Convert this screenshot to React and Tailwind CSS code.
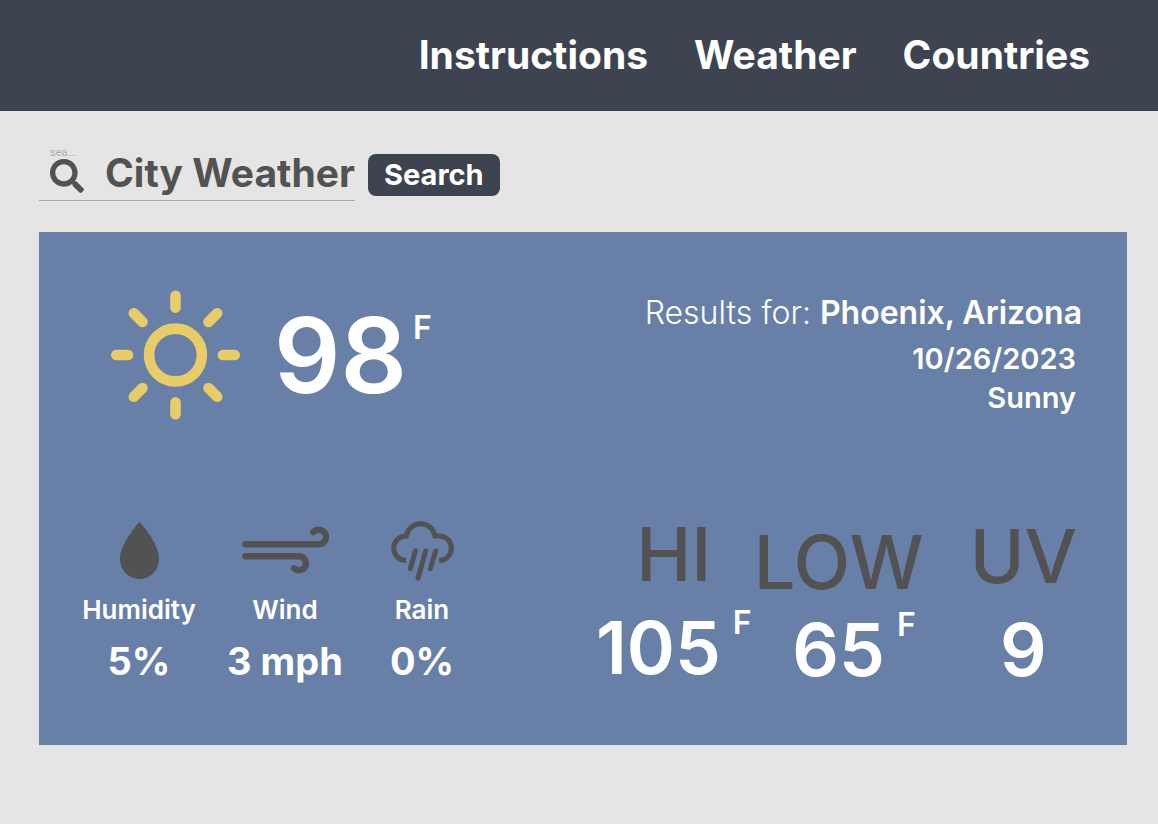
import { FaSearch } from "react-icons/fa";

const navItems = ["Instructions", "Weather", "Countries"];

function SunIcon() {
  return (
    <svg className="h-[130px] w-[130px] shrink-0" viewBox="0 0 130 130" fill="none" stroke="#e8cc68" strokeWidth="10.6" strokeLinecap="round" aria-hidden="true">
      <circle cx="65.5" cy="65" r="26.4" />
      <path d="M65.5 5.8V17.6M65.5 112.4V124.2M6.3 65H18.1M112.9 65H124.700" />
      <path d="M23.8 23.3L32.5 32M98.5 98L107.2 106.7M23.8 106.7L32.5 98M98.5 32L107.2 23.3" />
    </svg>
  );
}

function DropIcon() {
  return (
    <svg className="h-[57px] w-[39px]" viewBox="0 0 39 57" fill="#525252" aria-hidden="true">
      <path d="M19.5 0C12 8 0 24.5 0 36.5C0 48.2 8.7 57 19.5 57S39 48.2 39 36.5C39 24.5 27 8 19.5 0Z" />
    </svg>
  );
}

function WindIcon() {
  return (
    <svg className="h-12 w-[88px]" viewBox="0 0 88 48" fill="none" stroke="#525252" strokeWidth="6.4" strokeLinecap="round" aria-hidden="true">
      <path d="M4.5 18.3H77.5A7.3 7.3 0 1 0 72.3 6.1" />
      <path d="M4.5 30.3H58A7 7 0 1 1 53 42.3" />
    </svg>
  );
}

function RainIcon() {
  return (
    <svg className="h-[62px] w-[63px]" viewBox="0 0 189 186" fill="none" stroke="#525252" strokeWidth="15" aria-hidden="true">
      <path d="M45 124.5A36.75 36.75 0 0 1 45 51H46A43.5 43.5 0 0 1 132 51H144.5A36.75 36.75 0 0 1 144.5 124.5" />
      <path strokeLinecap="round" d="M73 96L58 149M104 96L81 177M134 96L118 149" />
    </svg>
  );
}

const conditions = [
  { label: "Humidity", value: "5%", Icon: DropIcon },
  { label: "Wind", value: "3 mph", Icon: WindIcon },
  { label: "Rain", value: "0%", Icon: RainIcon },
];

const extremes = [
  { label: "HI", value: "105", unit: "F", column: "mr-0.5 items-center", gap: "mt-5" },
  { label: "LOW", value: "65", unit: "F", column: "items-end pt-2", gap: "mt-3.5 pr-2" },
  { label: "UV", value: "9", column: "ml-[46px] items-center pt-0.5", gap: "mt-5" },
];

export default function App() {
  return (
    <div className="min-h-screen bg-[#e5e5e5] font-['Inter',sans-serif] text-white">
      <header className="bg-[#3d434f] pt-[31px] pr-[68px] pb-8 pl-10">
        <nav className="flex flex-wrap justify-end gap-[46px] text-[39px] leading-[48px] font-bold">
          {navItems.map((item) => (
            <a key={item} href={`#${item.toLowerCase()}`}>{item}</a>
          ))}
        </nav>
      </header>

      <main className="pr-[31px] pl-[39px]">
        <form className="flex items-end pt-[35px]" onSubmit={(e) => e.preventDefault()}>
          <div className="flex w-[316px] items-end border-b border-[#a9a9a9] pl-[11px] text-[#525252]">
            <label htmlFor="city" className="flex w-[55px] shrink-0 flex-col pb-[7px]">
              <span className="font-[Roboto,sans-serif] text-[11px] leading-3 text-[#ababab]">sea...</span>
              <FaSearch className="h-[34px] w-[34px]" aria-hidden="true" />
            </label>
            <input
              id="city"
              type="text"
              defaultValue="City Weather"
              aria-label="City"
              className="h-[54px] w-full min-w-0 bg-transparent text-[39px] font-bold outline-none"
            />
          </div>
          <button type="submit" className="mb-[5px] ml-[13px] h-[42px] rounded-lg bg-[#3d434f] px-4 text-[29px] leading-[42px] font-bold">
            Search
          </button>
        </form>

        <section className="mt-[31px] bg-[#687fa8] pb-[58px]">
          <div className="flex items-start justify-between pt-[58px] pr-[45px] pl-[71px]">
            <div className="flex">
              <SunIcon />
              <div className="ml-[34px] flex items-start">
                <span className="text-[104px] leading-[130px] font-semibold">98</span>
                <span className="mt-[18px] ml-1.5 text-[32px] leading-10 font-semibold">F</span>
              </div>
            </div>
            <div className="pt-[3px] text-right">
              <h1 className="text-[32px] leading-10 font-light">
                Results for: <strong className="font-semibold">Phoenix, Arizona</strong>
              </h1>
              <div className="mt-1.5 pr-1.5 text-[29px] leading-[39px] font-semibold">
                <p>10/26/2023</p>
                <p>Sunny</p>
              </div>
            </div>
          </div>

          <div className="flex justify-between pt-[88px] pr-[50px] pl-[29px]">
            <dl className="grid grid-cols-[142px_150px_124px] pt-[11px] text-center">
              {conditions.map(({ label, value, Icon }) => (
                <div key={label}>
                  <dt>
                    <span className="flex h-[62px] items-center justify-center"><Icon /></span>
                    <span className="mt-[13px] block text-[26px] leading-8 font-semibold">{label}</span>
                  </dt>
                  <dd className="mt-3 text-[38px] leading-[46px] font-bold">{value}</dd>
                </div>
              ))}
            </dl>
            <dl className="flex items-start pt-[9px]">
              {extremes.map(({ label, value, unit, column, gap }) => (
                <div key={label} className={`flex flex-col ${column}`}>
                  <dt className="text-[74px] leading-[74px] font-medium text-[#525252]">{label}</dt>
                  <dd className={`flex items-start ${gap}`}>
                    <span className="text-[73px] leading-[74px] font-semibold">{value}</span>
                    {unit && <span className="-mt-1 ml-3 text-[32px] leading-8 font-semibold">{unit}</span>}
                  </dd>
                </div>
              ))}
            </dl>
          </div>
        </section>
      </main>
    </div>
  );
}
